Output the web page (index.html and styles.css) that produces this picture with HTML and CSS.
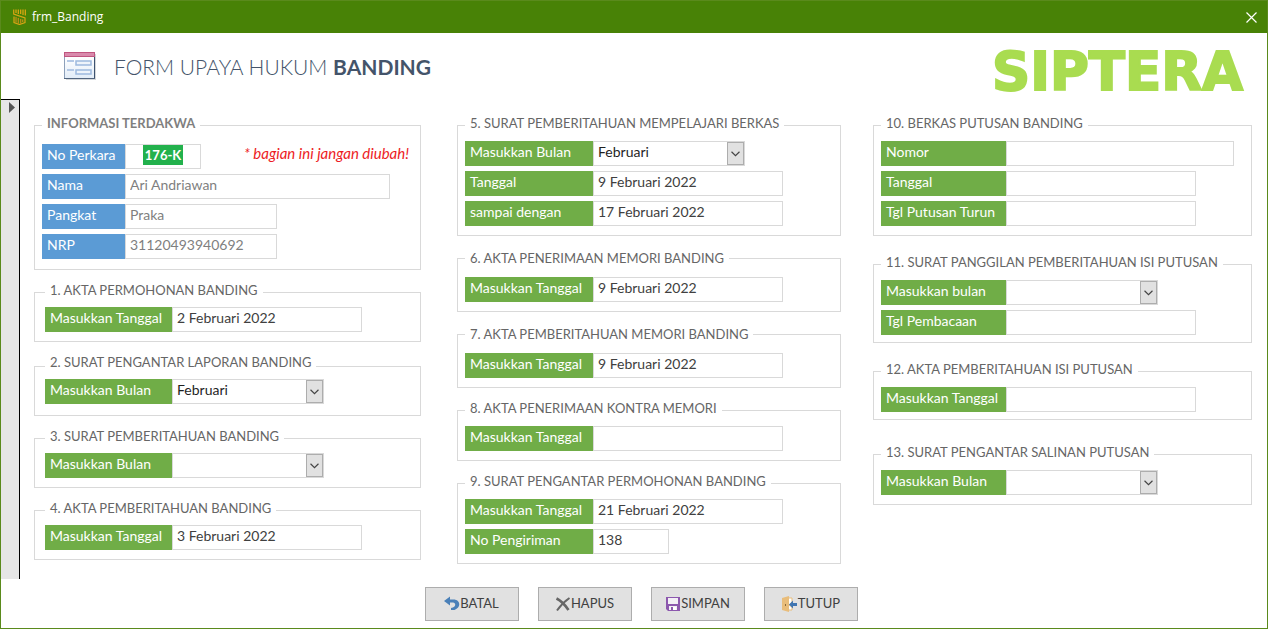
FILE: index.html
```html
<!DOCTYPE html>
<html lang="id">
<head>
<meta charset="utf-8">
<meta name="viewport" content="width=device-width, initial-scale=1">
<title>frm_Banding</title>
<link rel="stylesheet" href="styles.css">
</head>
<body>
<div class="window">
  <header class="titlebar">
    <svg class="app-icon" width="13" height="16" viewBox="0 0 13 16" fill="none" stroke-width="1.2" aria-hidden="true">
      <path d="M.7 .5V5L12 9v4.500l-5.500 2-5.500-2V7.500" stroke="#d9a514"/>
      <path d="M12.300 .5V6.500M10 .5V6M7.700.5V5M5.300.5V5M3 .5V4" stroke="#e3a912"/>
      <path d="M3 8v5.500M5.300 9v5.500M7.700 10v4.500M9.700 10.500V13" stroke="#c58f17"/>
    </svg>
    <span class="titlebar-text">frm_Banding</span>
    <button class="close" type="button" aria-label="Close">
      <svg width="11" height="11" viewBox="0 0 11 11" fill="none" stroke="#fff" stroke-width="1.200"><path d="M.5.5l10 10M10.500.5l-10 10"/></svg>
    </button>
  </header>

  <div class="header">
    <svg class="form-icon" width="33" height="29" viewBox="0 0 33 29" aria-hidden="true">
      <defs>
        <linearGradient id="paper" x1="0" y1="0" x2="0" y2="1"><stop offset="0" stop-color="#fff"/><stop offset="1" stop-color="#e3edf8"/></linearGradient>
      </defs>
      <rect x="2" y="2" width="30" height="26" fill="#b9bcc0" opacity=".6"/>
      <rect x="0" y="0" width="31" height="27" fill="#8da0ba"/>
      <rect x="1" y="5" width="29" height="21" fill="url(#paper)"/>
      <rect x="30" y="4" width="1" height="23" fill="#3d5270"/>
      <rect x="0" y="26" width="31" height="1" fill="#52657f"/>
      <rect x="0" y="0" width="31" height="5" fill="#c0557f"/>
      <rect x="1" y="1" width="29" height="3" fill="#d98aac"/>
      <path d="M3 9h7M3 18h7" stroke="#b4c9e6" stroke-width="2"/>
      <rect x="12" y="9" width="15" height="4" fill="#eef4fb" stroke="#9db9de" stroke-width="1.500"/>
      <rect x="12" y="18" width="15" height="4" fill="#eef4fb" stroke="#9db9de" stroke-width="1.500"/>
    </svg>
    <h1 class="title">FORM UPAYA HUKUM <strong>BANDING</strong></h1>
    <div class="brand">SIPTERA</div>
  </div>

  <form class="form">
    <div class="record">
      <svg width="6" height="11" viewBox="0 0 6 11" aria-hidden="true"><path d="M0 0l6 5.500L0 11z" fill="#555"/></svg>
    </div>
    <main class="columns">
      <div class="column column-a">
        <fieldset class="group group-info">
          <legend>INFORMASI TERDAKWA</legend>
          <div class="row">
            <label for="perkara">No Perkara</label>
            <span class="key"><input id="perkara" type="text" value="176-K"></span>
            <em class="note">* bagian ini jangan diubah!</em>
          </div>
          <div class="row"><label for="nama">Nama</label><input class="wide" id="nama" type="text" value="Ari Andriawan"></div>
          <div class="row"><label for="pangkat">Pangkat</label><input class="medium" id="pangkat" type="text" value="Praka"></div>
          <div class="row"><label for="nrp">NRP</label><input class="medium" id="nrp" type="text" value="31120493940692"></div>
        </fieldset>
        <fieldset class="group">
          <legend>1. AKTA PERMOHONAN BANDING</legend>
          <div class="row"><label for="s1">Masukkan Tanggal</label><input id="s1" type="text" value="2 Februari 2022"></div>
        </fieldset>
        <fieldset class="group group-raised">
          <legend>2. SURAT PENGANTAR LAPORAN BANDING</legend>
          <div class="row"><label for="s2">Masukkan Bulan</label><span class="combo"><select id="s2"><option>Februari</option></select><svg viewBox="0 0 17 23" aria-hidden="true"><path d="M4 9.500l4.500 4.500L13 9.500"/></svg></span></div>
        </fieldset>
        <fieldset class="group">
          <legend>3. SURAT PEMBERITAHUAN BANDING</legend>
          <div class="row"><label for="s3">Masukkan Bulan</label><span class="combo"><select id="s3"><option></option></select><svg viewBox="0 0 17 23" aria-hidden="true"><path d="M4 9.500l4.500 4.500L13 9.500"/></svg></span></div>
        </fieldset>
        <fieldset class="group">
          <legend>4. AKTA PEMBERITAHUAN BANDING</legend>
          <div class="row"><label for="s4">Masukkan Tanggal</label><input id="s4" type="text" value="3 Februari 2022"></div>
        </fieldset>
      </div>

      <div class="column column-b">
        <fieldset class="group">
          <legend>5. SURAT PEMBERITAHUAN MEMPELAJARI BERKAS</legend>
          <div class="row"><label for="s5a">Masukkan Bulan</label><span class="combo"><select id="s5a"><option>Februari</option></select><svg viewBox="0 0 17 23" aria-hidden="true"><path d="M4 9.500l4.500 4.500L13 9.500"/></svg></span></div>
          <div class="row"><label for="s5b">Tanggal</label><input id="s5b" type="text" value="9 Februari 2022"></div>
          <div class="row"><label for="s5c">sampai dengan</label><input id="s5c" type="text" value="17 Februari 2022"></div>
        </fieldset>
        <fieldset class="group group-roomy">
          <legend>6. AKTA PENERIMAAN MEMORI BANDING</legend>
          <div class="row"><label for="s6">Masukkan Tanggal</label><input id="s6" type="text" value="9 Februari 2022"></div>
        </fieldset>
        <fieldset class="group group-roomy">
          <legend>7. AKTA PEMBERITAHUAN MEMORI BANDING</legend>
          <div class="row"><label for="s7">Masukkan Tanggal</label><input id="s7" type="text" value="9 Februari 2022"></div>
        </fieldset>
        <fieldset class="group">
          <legend>8. AKTA PENERIMAAN KONTRA MEMORI</legend>
          <div class="row"><label for="s8">Masukkan Tanggal</label><input id="s8" type="text"></div>
        </fieldset>
        <fieldset class="group">
          <legend>9. SURAT PENGANTAR PERMOHONAN BANDING</legend>
          <div class="row"><label for="s9a">Masukkan Tanggal</label><input id="s9a" type="text" value="21 Februari 2022"></div>
          <div class="row"><label for="s9b">No Pengiriman</label><input class="short" id="s9b" type="text" value="138"></div>
        </fieldset>
      </div>

      <div class="column column-c">
        <fieldset class="group">
          <legend>10. BERKAS PUTUSAN BANDING</legend>
          <div class="row"><label for="s10a">Nomor</label><input class="long" id="s10a" type="text"></div>
          <div class="row"><label for="s10b">Tanggal</label><input id="s10b" type="text"></div>
          <div class="row"><label for="s10c">Tgl Putusan Turun</label><input id="s10c" type="text"></div>
        </fieldset>
        <fieldset class="group">
          <legend>11. SURAT PANGGILAN PEMBERITAHUAN ISI PUTUSAN</legend>
          <div class="row"><label for="s11a">Masukkan bulan</label><span class="combo"><select id="s11a"><option></option></select><svg viewBox="0 0 17 23" aria-hidden="true"><path d="M4 9.500l4.500 4.500L13 9.500"/></svg></span></div>
          <div class="row"><label for="s11b">Tgl Pembacaan</label><input id="s11b" type="text"></div>
        </fieldset>
        <fieldset class="group">
          <legend>12. AKTA PEMBERITAHUAN ISI PUTUSAN</legend>
          <div class="row"><label for="s12">Masukkan Tanggal</label><input id="s12" type="text"></div>
        </fieldset>
        <fieldset class="group">
          <legend>13. SURAT PENGANTAR SALINAN PUTUSAN</legend>
          <div class="row"><label for="s13">Masukkan Bulan</label><span class="combo"><select id="s13"><option></option></select><svg viewBox="0 0 17 23" aria-hidden="true"><path d="M4 9.500l4.500 4.500L13 9.500"/></svg></span></div>
        </fieldset>
      </div>
    </main>
  </form>

  <footer class="actions">
    <button class="action" type="button">
      <svg width="16" height="16" viewBox="0 0 16 16" aria-hidden="true"><path d="M0 5l6-4.500V3.500h3.500c7 0 8 8 1 10.500H7v-2C12.500 11.500 12 6.500 9 6.500H6V9.500z" fill="#4a80b8"/></svg>BATAL
    </button>
    <button class="action" type="button">
      <svg width="16" height="16" viewBox="0 0 16 16" fill="none" stroke="#666" aria-hidden="true"><path d="M1.500 2.500c4 2 9 7 12 11.500" stroke-width="2.600"/><path d="M14.500 2C10 5 5 10 2 14.500" stroke-width="2"/></svg>HAPUS
    </button>
    <button class="action" type="button">
      <svg width="16" height="16" viewBox="0 0 16 16" aria-hidden="true"><path d="M1 1h14v14H3l-2-2z" fill="#8c58ae"/><path d="M3 2h10v6H3zM4 10h8v4H4z" fill="#f3eff6"/><path d="M6 11h2v3H6z" fill="#8c58ae"/><path d="M8 11h3v3H8z" fill="#fff"/></svg>SIMPAN
    </button>
    <button class="action" type="button">
      <svg width="17" height="16" viewBox="0 0 17 16" aria-hidden="true"><path d="M7 2h4v4l-3 3 3 2v3H7z" fill="#fff" stroke="#e9bd7b"/><path d="M1 2l7-2v16l-7-2z" fill="#e9bd7b"/><path d="M4 8h1v2H4z" fill="#8a6a3a"/><path d="M8 8.500l4-4V7h4v3h-4v2.500z" fill="#3f75b2"/></svg>TUTUP
    </button>
  </footer>
</div>
</body>
</html>
```
FILE: styles.css
```css
* {
  box-sizing: border-box;
}

body {
  margin: 0;
  background: #fff;
  color: #404040;
  font: 14px/17px Lato, "Open Sans", sans-serif;
}

input,
select,
button {
  margin: 0;
  border-radius: 0;
  color: inherit;
  font: inherit;
}

.window {
  display: flex;
  flex-direction: column;
  min-height: 100vh;
  border: 1px solid #5a8a1c;
}

/* Title bar */
.titlebar {
  display: flex;
  align-items: center;
  height: 32px;
  padding: 0 10px 0 12px;
  background: #488206;
  color: #fff;
  font: 12px/16px "Open Sans", "Noto Sans", sans-serif;
}

.titlebar-text {
  flex: 1;
  padding-left: 6px;
}

.close {
  display: flex;
  padding: 0;
  border: 0;
  background: none;
}

/* Form heading */
.header {
  display: flex;
  align-items: center;
  height: 66px;
  padding: 0 24px 0 63px;
}

.title {
  flex: 1;
  margin: 0;
  padding: 1px 0 0 17px;
  color: #44546a;
  font-size: 21px;
  font-weight: 300;
  line-height: 28px;
}

.title strong {
  font-weight: 700;
}

.brand {
  padding-top: 12px;
  color: #a9dc50;
  font: 700 53px/56px "DejaVu Sans", sans-serif;
  -webkit-text-stroke: 2px #a9dc50;
}

/* Form body */
.form {
  display: flex;
}

.record {
  flex: none;
  width: 19px;
  padding: 2px 0 0 8px;
  border-top: 1px solid #000;
  border-right: 1px solid #000;
  background: #e6e6e6;
  line-height: 0;
}

.columns {
  flex: 1;
  display: grid;
  grid-template-columns: 387fr 420fr 411fr;
  padding: 16px 15px 15px 14px;
}

.column {
  display: flex;
  flex-direction: column;
  gap: 12px;
  min-width: 0;
  --label: 127px;
}

.column-b {
  padding-left: 36px;
  --label: 128px;
}

.column-c {
  gap: 18px;
  padding-left: 32px;
  --label: 125px;
}

.group {
  display: flex;
  flex-direction: column;
  gap: 5px;
  min-width: 0;
  margin: 0;
  padding: 5px 7px 9px;
  border: 1px solid #d9d9d9;
}

.column-a .group {
  padding: 4px 10px 9px;
}

.column-a .group-info {
  padding: 8px 7px 10px;
  color: #7f7f7f;
  --label: 83px;
}

.column-a .group-raised {
  padding-top: 0;
  padding-bottom: 11px;
}

.group-roomy {
  margin-top: 2px;
  padding-top: 10px;
}

.column-c .group {
  padding-bottom: 7px;
}

.column-c .group:first-child {
  padding-bottom: 9px;
}

.column-c .group:last-child {
  margin-top: 6px;
  padding-bottom: 9px;
}

legend {
  padding: 0 5px 4px;
  color: #666;
  font-size: 13px;
  white-space: nowrap;
}

.group-info legend {
  color: #7f7f7f;
  font-weight: 700;
}

.group-raised legend {
  padding-bottom: 8px;
}

.group-roomy legend {
  padding-bottom: 0;
}

.row {
  display: flex;
}

.row label {
  flex: none;
  width: var(--label);
  height: 25px;
  padding-left: 5px;
  background: #70ad47;
  color: #fff;
  line-height: 22px;
}

.group-info label {
  background: #5b9bd5;
}

.row input {
  width: 190px;
  height: 25px;
  padding: 0 4px 4px;
  border: 1px solid #d9d9d9;
  background: #fff;
}

.row .wide {
  width: 265px;
}

.row .medium {
  width: 152px;
}

.row .long {
  width: 228px;
}

.row .short {
  width: 76px;
}

.key {
  display: flex;
  justify-content: center;
  width: 76px;
  height: 25px;
  border: 1px solid #d9d9d9;
}

.row .key input {
  width: 40px;
  height: 20px;
  padding: 0;
  border: 0;
  background: #22b14c;
  color: #fff;
  font-size: 13px;
  font-weight: 700;
  text-align: center;
}

.note {
  margin-left: auto;
  padding-right: 4px;
  color: #ed1c24;
  font-size: 15px;
  line-height: 19px;
}

.combo {
  position: relative;
  width: 152px;
  height: 25px;
}

.combo select {
  width: 100%;
  height: 100%;
  padding: 0 20px 4px 4px;
  border: 1px solid #d9d9d9;
  appearance: none;
  background: #fff;
  color: #1f1f1f;
}

.combo svg {
  position: absolute;
  top: 1px;
  right: 1px;
  width: 17px;
  height: 23px;
  border: 1px solid #adadad;
  background: #e1e1e1;
  fill: none;
  stroke: #444;
  stroke-width: 1.3;
  pointer-events: none;
}

/* Buttons */
.actions {
  display: flex;
  justify-content: center;
  gap: 19px;
  padding: 8px 0 7px 14px;
}

.action {
  display: flex;
  align-items: center;
  justify-content: center;
  gap: 0;
  width: 94px;
  height: 34px;
  padding: 0 0 1px;
  border: 1px solid #adadad;
  background: #e1e1e1;
  font-size: 13px;
}
```
